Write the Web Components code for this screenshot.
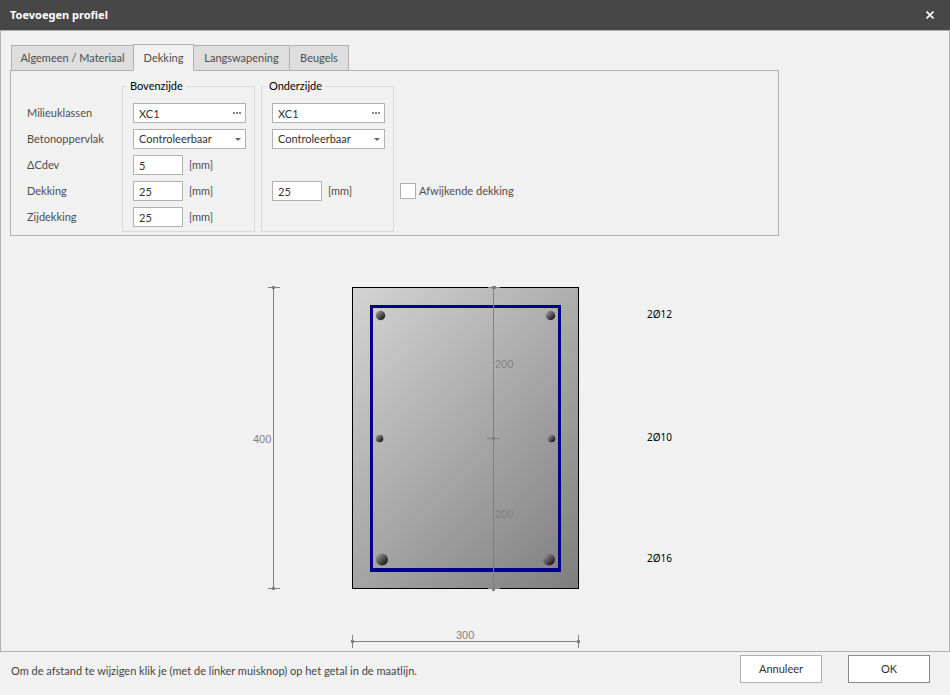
<!DOCTYPE html>
<html lang="nl">
<head>
<meta charset="utf-8">
<title>Toevoegen profiel</title>
<style>
  html, body { margin: 0; height: 100%; }
  body { font: 11px/14px Lato, "Noto Sans", sans-serif; color: #444; background: #f1f1f1; }
</style>
</head>
<body>
<profile-dialog heading="Toevoegen profiel">
  <tab-strip></tab-strip>
  <cover-form></cover-form>
  <section-drawing></section-drawing>
  <dialog-footer slot="footer">Om de afstand te wijzigen klik je (met de linker muisknop) op het getal in de maatlijn.</dialog-footer>
</profile-dialog>

<script>
const define = (name, html, setup) => {
  const template = document.createElement('template');
  template.innerHTML = html;
  customElements.define(name, class extends HTMLElement {
    constructor() {
      super();
      this.attachShadow({ mode: 'open' }).append(template.content.cloneNode(true));
    }
    connectedCallback() { if (setup) setup(this, this.shadowRoot); }
  });
};

define('profile-dialog', `
  <style>
    :host { display: flex; flex-direction: column; min-height: 100vh; box-sizing: border-box; }
    header { display: flex; align-items: center; justify-content: space-between; height: 30px; padding: 0 10px; background: #474747; color: #fff; }
    h1 { margin: 0; font: bold 11px/14px "Noto Sans", sans-serif; }
    button { display: grid; place-items: center; width: 20px; height: 20px; padding: 0; border: 0; background: none; }
    main { flex: 1; display: flex; flex-direction: column; padding: 13px 9px 0; border: 1px solid #b0b0b0; }
  </style>
  <header>
    <h1></h1>
    <button type="button" aria-label="Sluiten">
      <svg width="8" height="8" viewBox="0 0 8 8" stroke="#fff" stroke-width="1.6"><path d="M.5.5l7 7M7.5.5l-7 7"/></svg>
    </button>
  </header>
  <main><slot></slot></main>
  <slot name="footer"></slot>
`, (host, root) => { root.querySelector('h1').textContent = host.getAttribute('heading'); });

define('tab-strip', `
  <style>
    :host { display: block; }
    div { display: grid; grid-template-columns: 122px 60px 96px 59px; align-items: end; padding-left: 1px; margin-bottom: -1px; }
    button { box-sizing: border-box; height: 26px; margin: 0 -1px 0 0; padding: 0; border: 1px solid #b0b0b0; background: #dedede; color: #4e4e4e; font: inherit; }
    button[aria-selected=true] { position: relative; height: 27px; border-bottom-color: #f1f1f1; background: #f1f1f1; }
  </style>
  <div role="tablist">
    <button type="button" role="tab" aria-selected="false">Algemeen / Materiaal</button>
    <button type="button" role="tab" aria-selected="true">Dekking</button>
    <button type="button" role="tab" aria-selected="false">Langswapening</button>
    <button type="button" role="tab" aria-selected="false">Beugels</button>
  </div>
`);

define('group-box', `
  <style>
    :host { display: block; }
    fieldset { box-sizing: border-box; height: 100%; min-width: 0; margin: 0; padding: 10px 8px 4px 10px; border: 1px solid #dadada; }
    legend { margin-left: -6px; padding: 0 3px; color: #000; line-height: 14px; }
    div { display: grid; grid-template-columns: minmax(0, 1fr); grid-auto-rows: 20px; row-gap: 6px; }
  </style>
  <fieldset><legend></legend><div><slot></slot></div></fieldset>
`, (host, root) => { root.querySelector('legend').textContent = host.getAttribute('caption'); });

define('cover-form', `
  <style>
    :host { display: block; }
    form { display: flex; box-sizing: border-box; max-width: 769px; padding: 8px 16px 3px; border: 1px solid #b0b0b0; }
    .names { display: grid; grid-auto-rows: 20px; row-gap: 6px; align-content: start; width: 95px; padding-top: 24px; }
    label { align-self: center; color: #4e4e4e; white-space: nowrap; }
    group-box { width: 133px; margin-right: 6px; }
    .row { display: flex; align-items: center; gap: 6px; color: #4e4e4e; }
    input, select { box-sizing: border-box; height: 20px; margin: 0; border: 1px solid #b0b0b0; border-radius: 0; background: #fff; color: #333; font: inherit; }
    input.num { width: 50px; padding: 0 5px; }
    .picker { display: flex; box-sizing: border-box; border: 1px solid #b0b0b0; background: #fff; }
    .picker input { flex: 1; min-width: 0; height: 18px; padding: 0 5px; border: 0; }
    .picker button { display: grid; place-items: center; width: 17px; padding: 0; border: 0; background: none; }
    .combo { display: grid; grid-template-columns: minmax(0, 1fr); }
    .combo > * { grid-area: 1 / 1; }
    .combo select { width: 100%; padding: 0 5px; appearance: none; }
    .combo svg { place-self: center end; margin-right: 5px; pointer-events: none; }
    .check { display: grid; grid-template-rows: repeat(5, 20px); row-gap: 6px; padding-top: 24px; }
    .check div { grid-row: 4; display: flex; align-items: center; gap: 3px; }
    .check input { appearance: none; width: 16px; height: 16px; }
  </style>
  <form>
    <div class="names">
      <label for="m1">Milieuklassen</label>
      <label for="s1">Betonoppervlak</label>
      <label for="c1">ΔCdev</label>
      <label for="d1">Dekking</label>
      <label for="z1">Zijdekking</label>
    </div>
    <group-box caption="Bovenzijde">
      <div class="picker"><input id="m1" value="XC1"><button type="button" aria-label="Milieuklassen kiezen"><svg width="8" height="2" viewBox="0 0 8 2" fill="#888"><path d="M0 0h2v2H0zM3 0h2v2H3zM6 0h2v2H6z"/></svg></button></div>
      <div class="combo"><select id="s1"><option>Controleerbaar</option></select><svg width="6" height="3" viewBox="0 0 6 3" fill="#666"><path d="M0 0h6L3 3z"/></svg></div>
      <div class="row"><input class="num" id="c1" value="5"><span>[mm]</span></div>
      <div class="row"><input class="num" id="d1" value="25"><span>[mm]</span></div>
      <div class="row"><input class="num" id="z1" value="25"><span>[mm]</span></div>
    </group-box>
    <group-box caption="Onderzijde">
      <div class="picker"><input aria-label="Milieuklassen onderzijde" value="XC1"><button type="button" aria-label="Milieuklassen kiezen"><svg width="8" height="2" viewBox="0 0 8 2" fill="#888"><path d="M0 0h2v2H0zM3 0h2v2H3zM6 0h2v2H6z"/></svg></button></div>
      <div class="combo"><select aria-label="Betonoppervlak onderzijde"><option>Controleerbaar</option></select><svg width="6" height="3" viewBox="0 0 6 3" fill="#666"><path d="M0 0h6L3 3z"/></svg></div>
      <div class="row" style="grid-row: 4"><input class="num" aria-label="Dekking onderzijde" value="25"><span>[mm]</span></div>
    </group-box>
    <div class="check"><div><input type="checkbox" id="a1"><label for="a1">Afwijkende dekking</label></div></div>
  </form>
`);

define('section-drawing', `
  <style>
    :host { flex: 1; display: flex; justify-content: center; align-items: flex-end; }
    svg { display: block; }
    .dim { stroke: #808080; fill: none; shape-rendering: crispEdges; }
    .node { fill: #808080; shape-rendering: crispEdges; }
    .num { font: 11px "Liberation Sans", sans-serif; fill: #808080; }
    .bar { font: 10px "Noto Sans", sans-serif; fill: #000; }
  </style>
  <svg width="450" height="371" viewBox="250 280 450 371" role="img" aria-label="Doorsnede 300 × 400">
    <defs>
      <linearGradient id="concrete" gradientUnits="userSpaceOnUse" x1="333" y1="314" x2="598" y2="562">
        <stop offset="0" stop-color="#d3d3d3"/><stop offset="1" stop-color="#7f7f7f"/>
      </linearGradient>
      <linearGradient id="steel" x1="0.1" y1="0.1" x2="0.9" y2="0.9">
        <stop offset="0" stop-color="#999"/><stop offset="1" stop-color="#111"/>
      </linearGradient>
    </defs>
    <rect x="352.5" y="287.5" width="226" height="301" fill="url(#concrete)" stroke="#000"/>
    <path d="M370 305h191v267H370zM373 308v260h185V308z" fill="#00008b" fill-rule="evenodd"/>
    <g fill="url(#steel)">
      <circle cx="380.5" cy="315.5" r="4.7"/><circle cx="550.5" cy="315.5" r="4.7"/>
      <circle cx="379.5" cy="438.5" r="3.8"/><circle cx="551.5" cy="438.5" r="3.8"/>
      <circle cx="382" cy="559.5" r="6"/><circle cx="549" cy="559.5" r="6"/>
    </g>
    <path class="dim" d="M273.5 287v302M268 287.5h12M268 588.5h12M493.5 287v302M488 287.5h12M487 438.5h13M488 588.5h12M352 641.5h227M352.5 635v13M578.5 635v13"/>
    <path class="node" d="M272 286h3v3h-3zM272 587h3v3h-3zM492 286h4v3h-4zM492 437h3v3h-3zM492 587h3v4h-3zM351 640h3v3h-3zM577 640h3v3h-3z"/>
    <text class="num" x="253" y="443">400</text>
    <text class="num" x="495" y="368">200</text>
    <text class="num" x="495" y="518">200</text>
    <text class="num" x="456" y="639">300</text>
    <text class="bar" x="647" y="318">2Ø12</text>
    <text class="bar" x="647" y="441">2Ø10</text>
    <text class="bar" x="647" y="562">2Ø16</text>
  </svg>
`);

define('dialog-footer', `
  <style>
    :host { display: flex; align-items: flex-start; gap: 26px; padding: 3px 20px 12px 11px; }
    p { flex: 1; margin: 0; padding-top: 9px; }
    button { box-sizing: border-box; width: 82px; height: 28px; padding: 0; border: 1px solid #b0b0b0; background: #fff; color: #333; font: inherit; }
    .ok { border-color: #8a8a8a; }
  </style>
  <p><slot></slot></p>
  <button type="button">Annuleer</button>
  <button type="button" class="ok">OK</button>
`);
</script>
</body>
</html>
